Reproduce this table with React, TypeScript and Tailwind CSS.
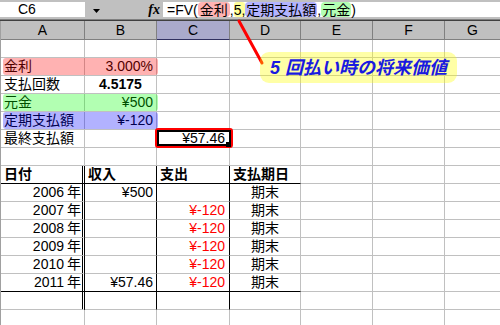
import React from 'react';
import { twMerge } from 'tailwind-merge';

type Cell = { t?: React.ReactNode; cls?: string };

const COLS = 'grid-cols-[84px_72px_73px_71px_72px_72px_1fr]';
const base =
  'border-r border-b border-[#c0c0c0] px-[3px] leading-[17px] whitespace-nowrap overflow-hidden';

// table block borders (rows 8-15)
const dA = 'border-r-[3px] border-double border-r-black';
const dB = 'border-r-black';
const bottom = 'border-b-black';

const Row: React.FC<{ cells: Cell[] }> = ({ cells }) => {
  const all = [...cells];
  while (all.length < 7) all.push({});
  return (
    <div className={`grid ${COLS} h-[18px]`}>
      {all.map((c, i) => (
        <div key={i} className={twMerge(base, i === 6 && 'border-r-0', c.cls)}>
          {c.t}
        </div>
      ))}
    </div>
  );
};

const year = (y: string) => (
  <>
    {y}
    <span className="pl-[3px]">年</span>
  </>
);

const dataRows: { y: string; inc?: string; out?: string }[] = [
  { y: '2006', inc: '¥500' },
  { y: '2007', out: '¥-120' },
  { y: '2008', out: '¥-120' },
  { y: '2009', out: '¥-120' },
  { y: '2010', out: '¥-120' },
  { y: '2011', inc: '¥57.46', out: '¥-120' },
];

export default function App() {
  return (
    <div className="relative w-[500px] h-[325px] overflow-hidden bg-white text-black text-[14px] font-['Liberation_Sans','Noto_Sans_CJK_JP',sans-serif]">
      {/* Formula bar */}
      <div className="flex h-[19px] bg-[#c0c0c0] pt-[2px]">
        <div className="w-[85px] h-[15px] bg-white pl-[18px] leading-[15px]">C6</div>
        <div className="w-[78px] h-[15px] flex items-center">
          <svg width="7" height="4" className="ml-[8px] mt-[3px]">
            <polygon points="0,0 7,0 3.5,4" fill="#000" />
          </svg>
          <span className="ml-auto mr-[3px] font-['Liberation_Serif',serif] italic font-bold leading-[15px]">
            fx
          </span>
        </div>
        <div className="flex-1 h-[15px] bg-white pl-[4px] flex items-stretch leading-[16px]">
          <span>=FV(</span>
          <span className="bg-[#ffb3b3] rounded-[4px] px-[2px]">金利</span>
          <span>,</span>
          <span className="bg-[#ffff99] rounded-[3px]">5,</span>
          <span className="bg-[#b3b3ff] rounded-[4px] px-[1px]">定期支払額</span>
          <span>,</span>
          <span className="bg-[#b3ffb3] rounded-[4px] px-[1px]">元金</span>
          <span>)</span>
        </div>
      </div>
      <div className="h-[1px] bg-[#808080]" />
      <div className="h-[1px] bg-[#404040]" />

      <div className="border-l border-[#a0a0a0]">
        {/* Column headers */}
        <div className={`grid ${COLS} h-[19px] bg-[#c0c0c0]`}>
          {['A', 'B', 'C', 'D', 'E', 'F', 'G'].map((l) => (
            <div
              key={l}
              className={twMerge(
                'border-r border-b border-[#808080] text-center leading-[18px]',
                l === 'C' && 'bg-[#aaaacc] border-b-[#303060]',
                l === 'G' && 'border-r-0'
              )}
            >
              {l}
            </div>
          ))}
        </div>

        <Row cells={[]} />
        <Row cells={[{ t: '金利' }, { t: '3.000%', cls: 'text-right' }]} />
        <Row cells={[{ t: '支払回数' }, { t: '4.5175', cls: 'text-center font-bold' }]} />
        <Row cells={[{ t: '元金' }, { t: '¥500', cls: 'text-right' }]} />
        <Row cells={[{ t: '定期支払額' }, { t: '¥-120', cls: 'text-right' }]} />
        <Row cells={[{ t: '最終支払額' }, {}, { t: '¥57.46', cls: 'text-right pr-[4px]' }]} />
        <Row cells={[]} />
        <Row
          cells={[
            { t: '日付', cls: twMerge(dA, bottom, 'font-bold') },
            { t: '収入', cls: twMerge(dB, bottom, 'font-bold') },
            { t: '支出', cls: twMerge(dB, bottom, 'font-bold') },
            { t: '支払期日', cls: twMerge(bottom, 'font-bold') },
          ]}
        />
        {dataRows.map((r, i) => {
          const last = i === dataRows.length - 1 ? bottom : '';
          return (
            <Row
              key={r.y}
              cells={[
                { t: year(r.y), cls: twMerge(dA, 'text-right pr-[1px]', last) },
                { t: r.inc, cls: twMerge(dB, 'text-right', last) },
                { t: r.out, cls: twMerge(dB, 'text-right pr-[4px] text-[#ff0000]', last) },
                { t: '期末', cls: twMerge('text-center', last) },
              ]}
            />
          );
        })}
        <Row cells={[{ cls: dA }, { cls: dB }, { cls: dB }]} />
        <Row cells={[]} />
      </div>

      {/* reference highlights */}
      <div className="absolute left-[3px] top-[58px] w-[155px] h-[17px] rounded-[3px] bg-[#ff0000]/30" />
      <div className="absolute left-[3px] top-[94px] w-[155px] h-[17px] rounded-[3px] bg-[#00ff00]/30" />
      <div className="absolute left-[3px] top-[112px] w-[155px] h-[17px] rounded-[3px] bg-[#0000ff]/30" />

      {/* selected cell C6 */}
      <div className="absolute left-[155px] top-[128px] w-[78px] h-[20px] rounded-[3px] border-2 border-[#ff0000]" />
      <div className="absolute left-[157px] top-[130px] w-[74px] h-[16px] border-2 border-black" />
      <div className="absolute left-[226px] top-[142px] w-[5px] h-[5px] bg-black" />

      {/* annotation */}
      <svg className="absolute left-0 top-0 pointer-events-none" width="500" height="325">
        <line x1="239" y1="21" x2="262" y2="63" stroke="#ff0000" strokeWidth="3" strokeLinecap="round" />
      </svg>
      <div className="absolute left-[260px] top-[52px] w-[197px] h-[31px] rounded-[9px] bg-[#ffff00]/35 flex items-center pl-[10px]">
        <span className="text-[18px] italic font-bold text-[#1a1ae0] leading-none">
          5 回払い時の将来価値
        </span>
      </div>
    </div>
  );
}
